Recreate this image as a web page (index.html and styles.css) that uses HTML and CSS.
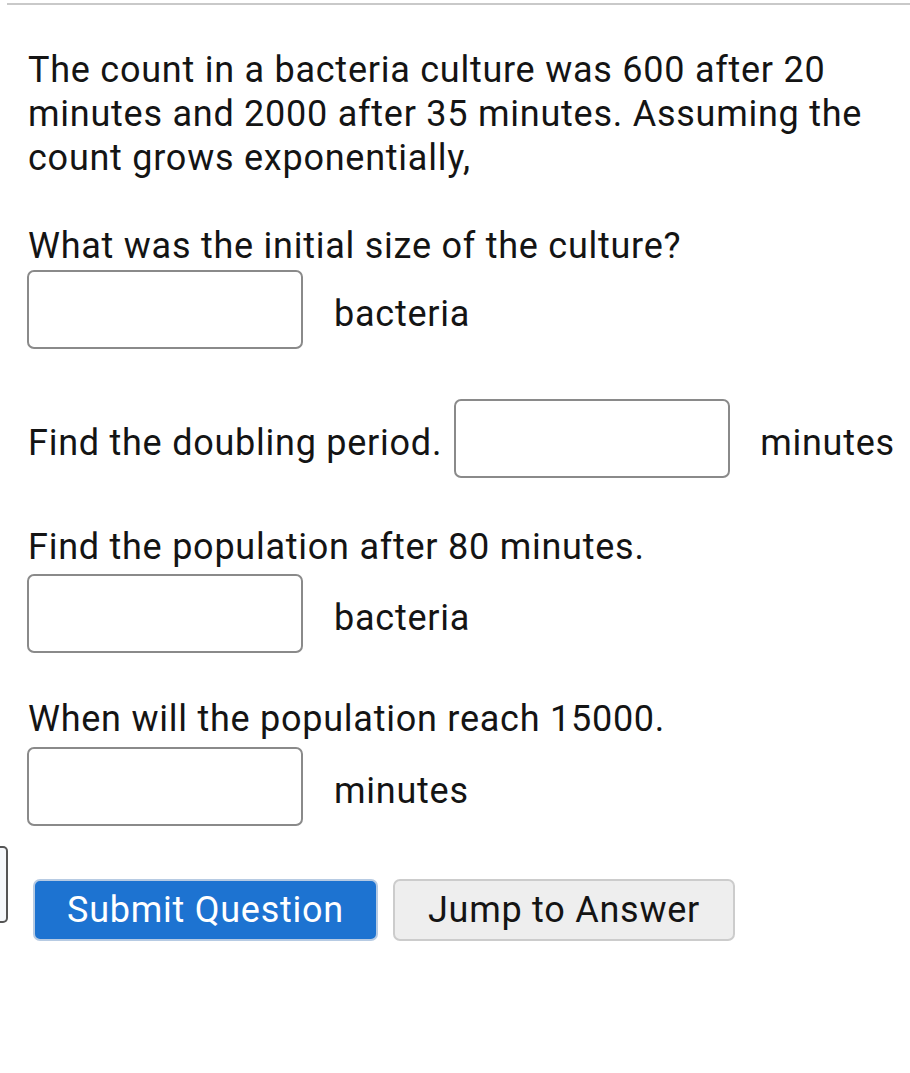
FILE: index.html
```html
<!DOCTYPE html>
<html lang="en">
<head>
<meta charset="utf-8">
<title>Question</title>
<link rel="stylesheet" href="styles.css">
</head>
<body>
<div class="rule"></div>
<main class="question">
  <p class="intro">The count in a bacteria culture was 600 after 20 minutes and 2000 after 35 minutes. Assuming the count grows exponentially,</p>

  <section class="part part-first">
    <p class="qtext">What was the initial size of the culture?</p>
    <div class="answer-row">
      <input class="answer" type="text" aria-label="initial size">
      <span class="unit">bacteria</span>
    </div>
  </section>

  <section class="part part-inline">
    <div class="answer-row inline-row">
      <span class="qtext inline-q">Find the doubling period.</span>
      <input class="answer" type="text" aria-label="doubling period">
      <span class="unit">minutes</span>
    </div>
  </section>

  <section class="part part-third">
    <p class="qtext">Find the population after 80 minutes.</p>
    <div class="answer-row row-third">
      <input class="answer" type="text" aria-label="population after 80 minutes">
      <span class="unit">bacteria</span>
    </div>
  </section>

  <section class="part part-fourth">
    <p class="qtext">When will the population reach 15000.</p>
    <div class="answer-row row-fourth">
      <input class="answer" type="text" aria-label="time to reach 15000">
      <span class="unit">minutes</span>
    </div>
  </section>
</main>

<div class="actions">
  <div class="stub"></div>
  <button class="btn btn-primary" type="button">Submit Question</button>
  <button class="btn btn-secondary" type="button">Jump to Answer</button>
</div>
</body>
</html>
```

FILE: styles.css
```css
html, body {
  margin: 0;
  padding: 0;
  background: #ffffff;
}

body {
  font-family: Roboto, "Noto Sans", "Liberation Sans", sans-serif;
  font-size: 36px;
  line-height: 44px;
  letter-spacing: 0.75px;
  color: #141414;
  width: 910px;
  overflow: hidden;
}

.rule {
  margin: 3px 0 0 7px;
  height: 2px;
  background: #c9c9c9;
}

.question {
  padding-left: 28px;
  padding-right: 10px;
}

.intro {
  margin: 43px 0 0 0;
}

.qtext {
  margin: 0;
}

.part-first {
  margin-top: 44px;
}

.part-inline {
  margin-top: 50px;
}

.part-third {
  margin-top: 47px;
}

.part-fourth {
  margin-top: 44px;
}

.answer-row {
  display: flex;
  align-items: center;
  margin-top: 2px;
}

.row-third {
  margin-top: 5px;
}

.row-fourth {
  margin-top: 6px;
}

.inline-row {
  margin-top: 0;
  white-space: nowrap;
}

.inline-q {
  padding-top: 8px;
}

.answer {
  box-sizing: border-box;
  flex: none;
  width: 276px;
  height: 79px;
  margin: 0 0 0 -1px;
  padding: 0 10px;
  border: 2px solid #8a8a8a;
  border-radius: 7px;
  background: #ffffff;
  font: inherit;
  outline: none;
}

.inline-row .answer {
  margin-left: 12px;
}

.unit {
  margin-left: 31px;
  padding-top: 8px;
}

.inline-row .unit {
  margin-left: 30px;
}

.actions {
  display: flex;
  align-items: flex-start;
  margin-top: 20px;
}

.stub {
  box-sizing: border-box;
  flex: none;
  width: 8px;
  height: 77px;
  border: 2px solid #555555;
  border-left: none;
  border-radius: 0 5px 5px 0;
  background: #f6f8fb;
}

.btn {
  box-sizing: border-box;
  flex: none;
  height: 62px;
  margin-top: 33px;
  border-radius: 7px;
  font-family: inherit;
  font-size: 36px;
  letter-spacing: 0.75px;
  line-height: 1;
  padding: 0;
  cursor: pointer;
}

.btn-primary {
  width: 345px;
  margin-left: 25px;
  background: #1d73d1;
  color: #ffffff;
  border: 2px solid #b7cbe3;
}

.btn-secondary {
  width: 342px;
  margin-left: 15px;
  background: #eeeeee;
  color: #141414;
  border: 2px solid #cccccc;
}
```
